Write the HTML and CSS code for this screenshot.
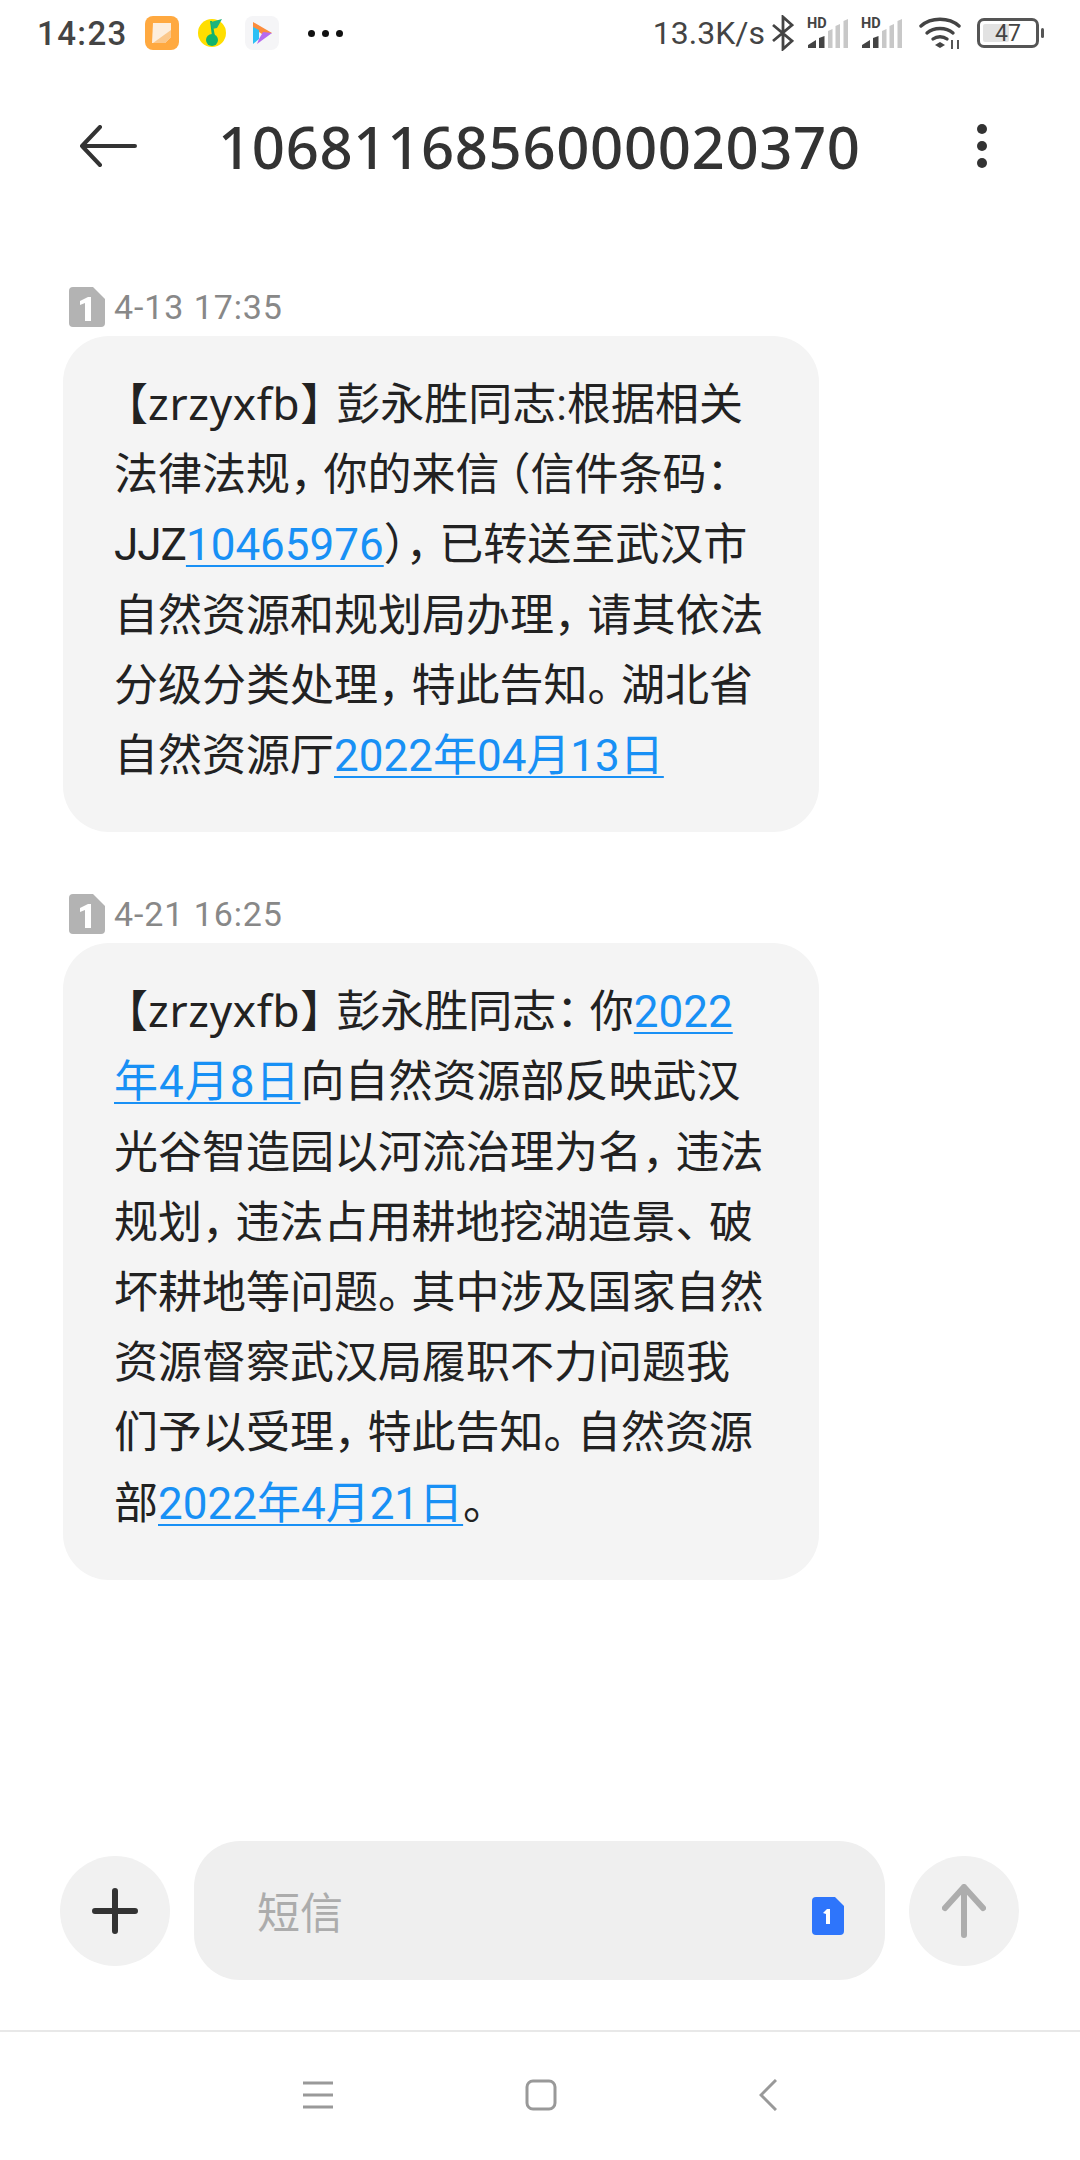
FILE: index.html
```html
<!DOCTYPE html>
<html lang="zh-CN">

<head>
    <meta charset="UTF-8">
    <meta name="viewport" content="width=device-width, initial-scale=1.0">
    <title>短信</title>
    <link rel="stylesheet" href="styles.css">
</head>

<body>

    <div class="status-bar">
        <div class="status-group">
            <span class="clock">14:23</span>
            <svg class="app-icon" viewBox="0 0 34 34">
                <rect width="34" height="34" rx="8" fill="#ffa940" />
                <path d="M8 7h18v14l-6 6H7z" fill="#fdeedd" />
                <path d="M8 27L26 14v7l-6 6z" fill="#fbc88c" />
            </svg>
            <svg class="app-icon" viewBox="0 0 34 34">
                <circle cx="17" cy="17" r="14" fill="#ffde00" />
                <path d="M15 5h2l3 15h-3z" fill="#10b36c" />
                <path d="M16 6l11-3-5 9-5 1z" fill="#1fb47c" />
                <circle cx="17" cy="24" r="6" fill="#10b36c" />
            </svg>
            <svg class="app-icon" viewBox="0 0 34 34">
                <rect width="34" height="34" rx="8" fill="#f5f5f7" />
                <path d="M8 6l19 11-7 3-12-8z" fill="#fb8c3c" />
                <path d="M8 11l6 3v9l-6 5z" fill="#2cc0f5" />
                <path d="M12 28l15-11-9-1-4 7z" fill="#b66af0" />
            </svg>
            <div class="more-dots"><i></i><i></i><i></i></div>
        </div>
        <div class="status-group">
            <span class="speed">13.3K/s</span>
            <svg class="bt-icon" viewBox="0 0 22 36" fill="none" stroke="#444" stroke-width="2.8">
                <path d="M1 10l19 16-9 8V2l9 8L1 26" />
            </svg>
            <svg class="signal" viewBox="0 0 42 34">
                <text x="0" y="14" class="hd-text">HD</text>
                <path d="M1 34v-3l8-5v8zM12 34V24l5.500-2v12z" fill="#444" />
                <path d="M21 34V17l4.500-2v19zM28.500 34V12l4.500-2v24zM36.500 34V7L41 5v29z" fill="#c8c8c8" />
            </svg>
            <svg class="signal" viewBox="0 0 42 34">
                <text x="0" y="14" class="hd-text">HD</text>
                <path d="M1 34v-3l8-5v8zM12 34V24l5.500-2v12z" fill="#444" />
                <path d="M21 34V17l4.500-2v19zM28.500 34V12l4.500-2v24zM36.500 34V7L41 5v29z" fill="#c8c8c8" />
            </svg>
            <svg class="wifi" viewBox="0 0 43 34" fill="none" stroke="#444" stroke-width="3.4" stroke-linecap="round">
                <path d="M2 10C12 1 30 1 40 10" />
                <path d="M8 17c7-6 19-6 26 0" />
                <path d="M14 23c4-3 10-3 14 0" />
                <path d="M16 29l5-3 5 3-5 3z" fill="#444" stroke="none" />
                <path d="M33 24v9M39 24v9" stroke-width="1.8" stroke-linecap="butt" />
            </svg>
            <div class="battery">
                <div class="battery-body">
                    <div class="battery-level"></div>
                    <span class="battery-num">47</span>
                </div>
                <div class="battery-tip"></div>
            </div>
        </div>
    </div>

    <div class="title-bar">
        <svg class="back-arrow" viewBox="0 0 58 42" fill="none" stroke="#333" stroke-width="4" stroke-linecap="round" stroke-linejoin="round">
            <path d="M21 2L3 21l18 19M3 21h53" />
        </svg>
        <div class="title">1068116856000020370</div>
        <div class="menu-dots"><i></i><i></i><i></i></div>
    </div>

    <div class="messages">
        <div class="message">
            <div class="stamp">
                <svg class="sim-icon" viewBox="0 0 36 40">
                    <path d="M4 0h20l12 12v24a4 4 0 0 1-4 4H4a4 4 0 0 1-4-4V4a4 4 0 0 1 4-4z" fill="#b3b3b3" />
                    <path d="M11 14l8-4h3v24h-6V16l-5 2z" fill="#fff" />
                </svg>
                <span>4-13 17:35</span>
            </div>
            <div class="bubble">
                <span class="bl">【</span><span class="sender">zrzyxfb</span><span class="br">】</span>彭永胜同志:根据相关<br>
                法律法规<span class="pn">，</span>你的来信<span class="pl">（</span>信件条码<span class="pn">：</span><br>
                <span class="code">JJZ</span><a>10465976</a>）<span class="pn">，</span>已转送至武汉市<br>
                自然资源和规划局办理<span class="pn">，</span>请其依法<br>
                分级分类处理<span class="pn">，</span>特此告知<span class="pn">。</span>湖北省<br>
                自然资源厅<a>2022年04月13日</a>
            </div>
        </div>

        <div class="message">
            <div class="stamp">
                <svg class="sim-icon" viewBox="0 0 36 40">
                    <path d="M4 0h20l12 12v24a4 4 0 0 1-4 4H4a4 4 0 0 1-4-4V4a4 4 0 0 1 4-4z" fill="#b3b3b3" />
                    <path d="M11 14l8-4h3v24h-6V16l-5 2z" fill="#fff" />
                </svg>
                <span>4-21 16:25</span>
            </div>
            <div class="bubble">
                <span class="bl">【</span><span class="sender">zrzyxfb</span><span class="br">】</span>彭永胜同志<span class="pn">：</span>你<a>2022</a><br>
                <a class="wide">年4月8日</a>向自然资源部反映武汉<br>
                光谷智造园以河流治理为名<span class="pn">，</span>违法<br>
                规划<span class="pn">，</span>违法占用耕地挖湖造景<span class="pn">、</span>破<br>
                坏耕地等问题<span class="pn">。</span>其中涉及国家自然<br>
                资源督察武汉局履职不力问题我<br>
                们予以受理<span class="pn">，</span>特此告知<span class="pn">。</span>自然资源<br>
                部<a>2022年4月21日</a>。
            </div>
        </div>
    </div>

    <div class="composer">
        <div class="round-btn">
            <svg class="plus-icon" viewBox="0 0 46 46" fill="none" stroke="#333" stroke-width="6" stroke-linecap="round">
                <path d="M23 3v40M3 23h40" />
            </svg>
        </div>
        <div class="input-box">
            <span class="placeholder">短信</span>
            <svg class="sim-blue" viewBox="0 0 32 38">
                <path d="M4 0h19l9 9v25a4 4 0 0 1-4 4H4a4 4 0 0 1-4-4V4a4 4 0 0 1 4-4z" fill="#2e75fb" />
                <path d="M11 16l4-4h3v15h-4V17z" fill="#fff" />
            </svg>
        </div>
        <div class="round-btn">
            <svg class="up-icon" viewBox="0 0 44 54" fill="none" stroke="#adadad" stroke-width="6" stroke-linecap="round" stroke-linejoin="round">
                <path d="M3 24L22 3l19 21M22 3v48" />
            </svg>
        </div>
    </div>

    <div class="nav-bar">
        <svg class="nav-menu" viewBox="0 0 30 28" fill="none" stroke="#999" stroke-width="3">
            <path d="M0 2h30M0 14h30M0 26h30" />
        </svg>
        <svg class="nav-home" viewBox="0 0 32 32" fill="none" stroke="#999" stroke-width="3">
            <rect x="2" y="2" width="28" height="28" rx="6" />
        </svg>
        <svg class="nav-back" viewBox="0 0 18 32" fill="none" stroke="#999" stroke-width="3">
            <path d="M17 1L2 16l15 15" />
        </svg>
    </div>

</body>

</html>
```

FILE: styles.css
```css
* {
    box-sizing: border-box;
}

body {
    margin: 0;
    width: 1080px;
    height: 2160px;
    display: flex;
    flex-direction: column;
    background-color: #fff;
    font-family: "Noto Sans", "Noto Sans CJK SC", sans-serif;
    overflow: hidden;
}

.status-bar {
    height: 66px;
    padding: 0 36px 0 37px;
    display: flex;
    justify-content: space-between;
    align-items: center;
    font-family: Roboto, sans-serif;
    color: #444;
}

.status-group {
    display: flex;
    align-items: center;
}

.clock {
    font-size: 33px;
    font-weight: 500;
    letter-spacing: 1.4px;
    margin-right: 17px;
}

.app-icon {
    width: 34px;
    height: 34px;
    margin-right: 16px;
}

.more-dots {
    display: flex;
    gap: 7px;
    margin-left: 13px;
}

.more-dots i {
    width: 7px;
    height: 7px;
    border-radius: 50%;
    background-color: #111;
}

.speed {
    font-size: 32px;
    margin-right: 7px;
}

.bt-icon {
    width: 22px;
    height: 36px;
    margin-right: 13px;
}

.signal {
    width: 42px;
    height: 34px;
    margin-right: 12px;
    margin-bottom: 4px;
}

.hd-text {
    font-family: Roboto, sans-serif;
    font-size: 14.5px;
    font-weight: 700;
    fill: #444;
}

.wifi {
    width: 43px;
    height: 34px;
    margin-left: 4px;
    margin-right: 15px;
}

.battery {
    display: flex;
    align-items: center;
    gap: 2px;
}

.battery-body {
    position: relative;
    width: 62px;
    height: 30px;
    border: 3px solid #555;
    border-radius: 7px;
    display: flex;
    justify-content: center;
    align-items: center;
}

.battery-level {
    position: absolute;
    left: 3px;
    top: 3px;
    bottom: 3px;
    width: 47%;
    background-color: #e2e2e2;
    border-radius: 2px;
}

.battery-num {
    position: relative;
    font-size: 23px;
}

.battery-tip {
    width: 3px;
    height: 10px;
    background-color: #555;
    border-radius: 2px;
}

.title-bar {
    height: 160px;
    padding: 0 93px 0 79px;
    display: flex;
    align-items: center;
    color: #333;
}

.back-arrow {
    width: 58px;
    height: 42px;
    margin-right: 81px;
}

.title {
    flex-grow: 1;
    font-size: 58px;
    letter-spacing: 0.65px;
    font-weight: 500;
    white-space: nowrap;
}

.menu-dots {
    display: flex;
    flex-direction: column;
    gap: 7px;
}

.menu-dots i {
    width: 10px;
    height: 10px;
    border-radius: 50%;
    background-color: #333;
}

.messages {
    flex-grow: 1;
    padding: 61px 0 0 63px;
    display: flex;
    flex-direction: column;
    gap: 62px;
}

.stamp {
    display: flex;
    align-items: center;
    gap: 9px;
    height: 40px;
    margin-left: 6px;
    margin-bottom: 9px;
    font-family: Roboto, sans-serif;
    font-size: 34px;
    letter-spacing: 0.9px;
    color: #888;
}

.sim-icon {
    width: 36px;
    height: 40px;
}

.bubble {
    width: 756px;
    padding: 32px 0 41px 51px;
    background-color: #f4f4f4;
    border-radius: 46px;
    font-family: Roboto, "Noto Sans CJK SC", sans-serif;
    font-size: 44px;
    line-height: 70.2px;
    color: #222;
    white-space: nowrap;
}

.bubble a {
    color: #1890f5;
    text-decoration: underline;
    text-underline-offset: 5px;
    text-decoration-thickness: 2px;
}

.bubble a.wide {
    letter-spacing: 1px;
}

/* full width punctuation is set narrower than the em box on the phone */
.pn {
    letter-spacing: -10.5px;
}

.pl {
    font-feature-settings: "halt";
    margin-left: 9px;
}

.bl {
    margin-left: -10px;
}

.br {
    letter-spacing: -8px;
}

.sender {
    font-family: "Noto Sans", sans-serif;
    letter-spacing: 0.7px;
}

.code {
    letter-spacing: -1px;
}

.composer {
    height: 139px;
    margin-bottom: 50px;
    padding-left: 60px;
    display: flex;
    align-items: center;
    gap: 24px;
}

.round-btn {
    width: 110px;
    height: 110px;
    border-radius: 50%;
    background-color: #f1f1f1;
    display: flex;
    justify-content: center;
    align-items: center;
}

.plus-icon {
    width: 46px;
    height: 46px;
}

.up-icon {
    width: 44px;
    height: 54px;
}

.input-box {
    width: 691px;
    height: 139px;
    padding: 0 41px 0 63px;
    background-color: #efefef;
    border-radius: 46px;
    display: flex;
    align-items: center;
    justify-content: space-between;
}

.placeholder {
    font-size: 43px;
    color: #acacac;
}

.sim-blue {
    width: 32px;
    height: 38px;
    margin-top: 10px;
}

.nav-bar {
    height: 130px;
    padding-bottom: 2px;
    border-top: 2px solid #e8e8e8;
    display: flex;
    justify-content: center;
    align-items: center;
    gap: 192px;
}

.nav-menu {
    width: 30px;
    height: 28px;
}

.nav-home {
    width: 32px;
    height: 32px;
}

.nav-back {
    width: 18px;
    height: 32px;
    margin-left: 10px;
}
```
